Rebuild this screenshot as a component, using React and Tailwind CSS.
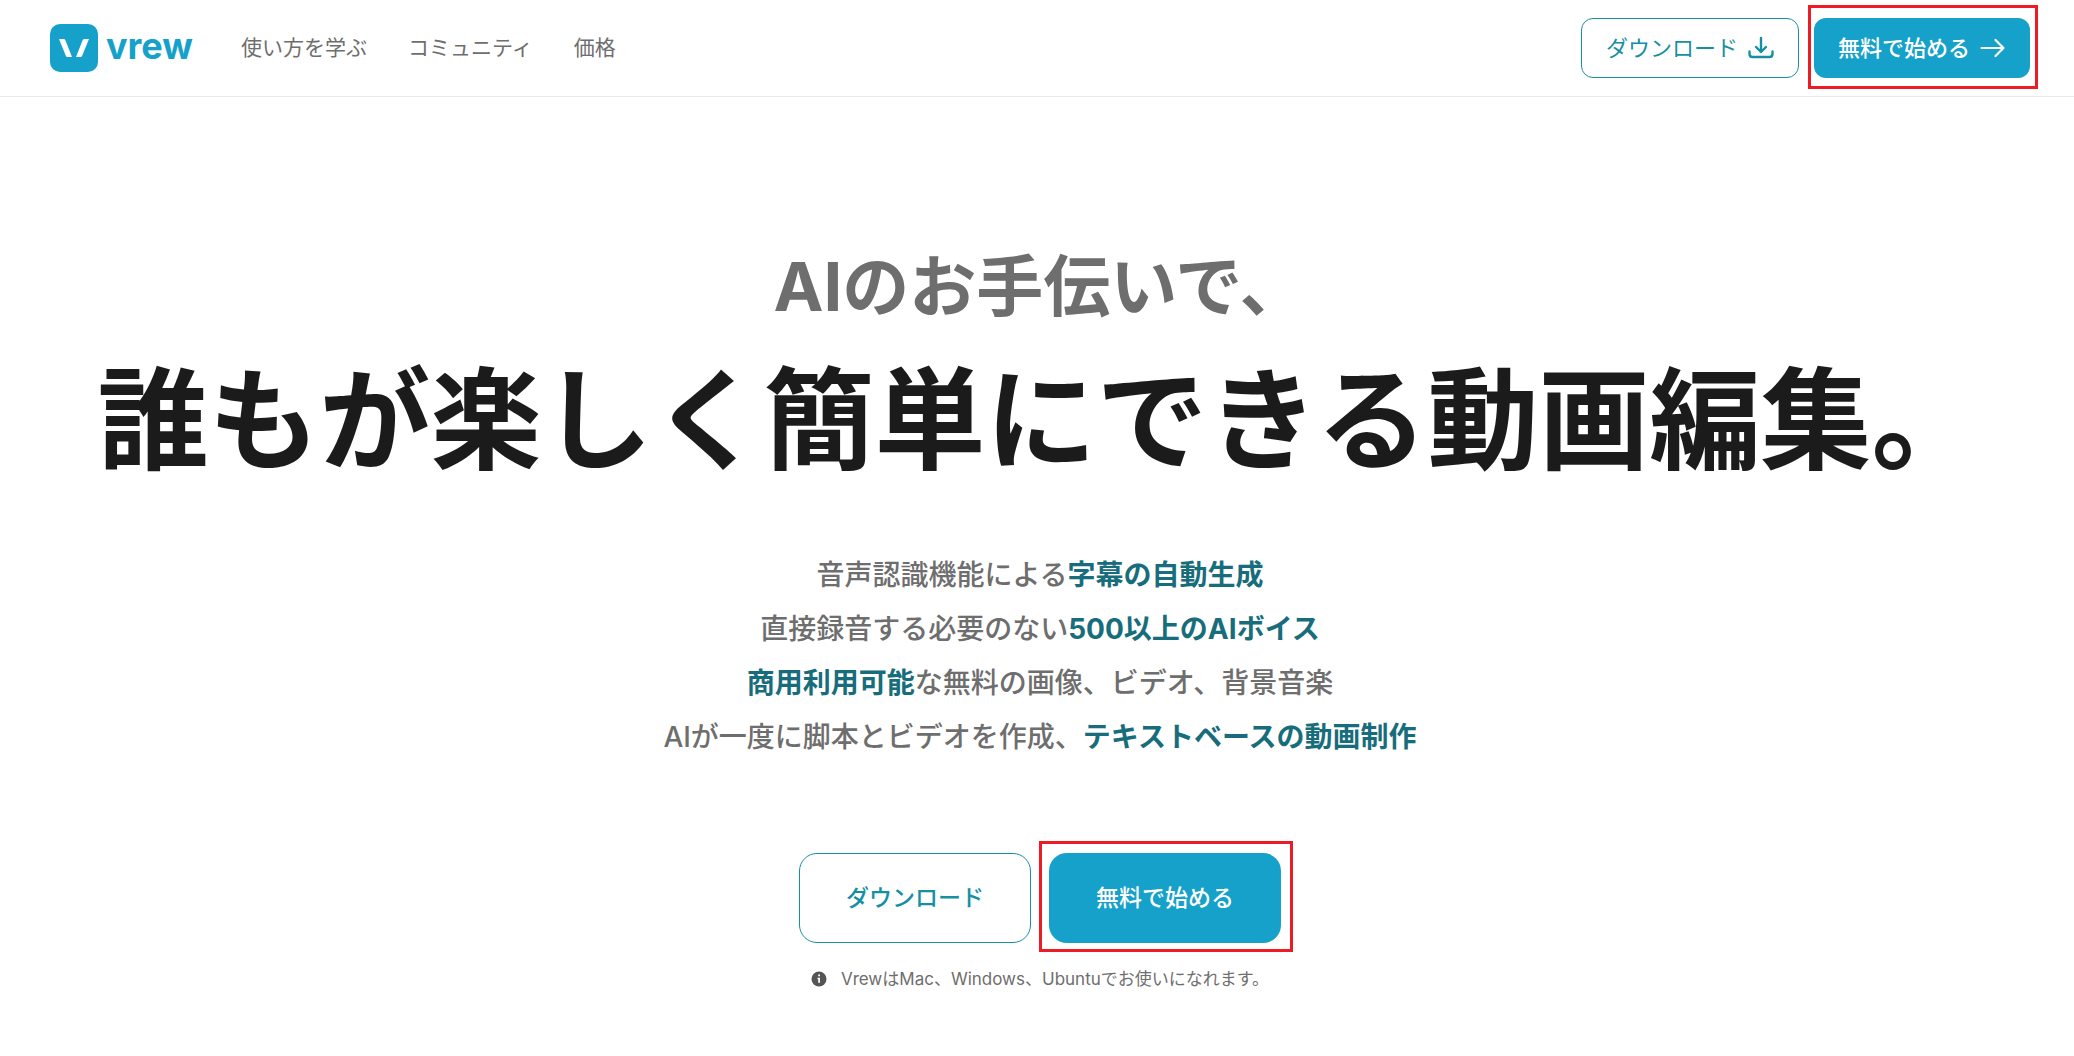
const NAV_LINKS = ['使い方を学ぶ', 'コミュニティ', '価格'];

function Logo() {
  return (
    <a href="#" aria-label="vrew" className="flex items-center gap-2">
      <svg viewBox="0 0 48 48" className="size-12" aria-hidden="true">
        <rect width="48" height="48" rx="10" fill="#15a1c9" />
        <path d="M9 15h4.500q1.400 0 2 1.400L22 33h-4.500q-1.200 0-1.700-1.200z" fill="#fff" />
        <path d="M39 15h-4.500q-1.400 0-2 1.400L26 33h4.500q1.200 0 1.700-1.200z" fill="#fff" />
      </svg>
      <span className="pb-1 text-4xl font-bold text-[#15a1c9]">vrew</span>
    </a>
  );
}

function DownloadIcon() {
  return (
    <svg viewBox="0 0 26 24" className="h-6 w-[26px]" fill="none" stroke="currentColor" strokeWidth="2.4" strokeLinecap="round" strokeLinejoin="round" aria-hidden="true">
      <path d="M13 2v13.500M8 11l5 5 5-5M1.500 15.500v2.500q0 3 3 3h17q3 0 3-3v-2.500" />
    </svg>
  );
}

function ArrowIcon() {
  return (
    <svg viewBox="0 0 26 24" className="h-6 w-[26px]" fill="none" stroke="currentColor" strokeWidth="2.200" strokeLinecap="round" strokeLinejoin="round" aria-hidden="true">
      <path d="M1.500 12h22M15.500 4l8 8-8 8" />
    </svg>
  );
}

function Header() {
  return (
    <header className="flex h-[97px] items-center justify-between border-b border-[#e8e8e8] pr-11 pl-[50px]">
      <div className="flex items-center gap-12">
        <Logo />
        <nav className="flex gap-[41px] text-[21px] text-[#6e6e6e]">
          {NAV_LINKS.map((label) => (
            <a key={label} href="#" className="hover:underline">{label}</a>
          ))}
        </nav>
      </div>

      <div className="flex gap-[15px] text-[22px]">
        <button type="button" className="flex h-15 items-center gap-2.5 rounded-xl border border-[#168fa3] px-6 text-[#168fa3]">
          ダウンロード
          <DownloadIcon />
        </button>
        <div className="relative">
          <button type="button" className="flex h-15 items-center gap-2.5 rounded-xl bg-[#15a1c9] px-6 font-medium text-white">
            無料で始める
            <ArrowIcon />
          </button>
          <span className="pointer-events-none absolute -top-[13px] -right-2 -bottom-[11px] -left-1.5 border-3 border-[#ed1c24]" />
        </div>
      </div>
    </header>
  );
}

function Strong({ children }) {
  return <strong className="font-bold text-[#176d7c]">{children}</strong>;
}

export default function App() {
  return (
    <div className="min-h-screen bg-white font-[Inter,'Noto_Sans_CJK_JP',sans-serif]" lang="ja">
      <Header />

      <main className="flex flex-col items-center pt-[141px] pl-1.5 text-center">
        <h1 className="font-bold text-[#1b1b1b]">
          <span className="block text-[67px] leading-[98px] text-[#6e6e6e]">AIのお手伝いで、</span>
          <span className="block text-[111px] leading-[170px]">誰もが楽しく簡単にできる動画編集。</span>
        </h1>

        <div className="mt-[42px] text-[28px] leading-[54px] font-medium text-[#6e6e6e]">
          <p>音声認識機能による<Strong>字幕の自動生成</Strong></p>
          <p>直接録音する必要のない<Strong>500以上のAIボイス</Strong></p>
          <p><Strong>商用利用可能</Strong>な無料の画像、ビデオ、背景音楽</p>
          <p>AIが一度に脚本とビデオを作成、<Strong>テキストベースの動画制作</Strong></p>
        </div>

        <div className="mt-[89px] flex gap-[18px] text-[23px]">
          <button type="button" className="h-[90px] rounded-[18px] border border-[#168fa3] px-[46px] font-medium text-[#168fa3]">
            ダウンロード
          </button>
          <div className="relative">
            <button type="button" className="h-[90px] rounded-[18px] bg-[#15a1c9] px-[47px] font-medium text-white">
              無料で始める
            </button>
            <span className="pointer-events-none absolute -top-3 -right-3 -bottom-[9px] -left-2.5 border-3 border-[#ed1c24]" />
          </div>
        </div>

        <p className="mt-6 flex items-center gap-3.5 text-[17px] leading-6 text-[#6e6e6e]">
          <svg viewBox="0 0 16 16" className="size-4" aria-hidden="true">
            <circle cx="8" cy="8" r="7.500" fill="#555" />
            <path d="M7.200 3.500h1.800v1.800H7.200zM6.500 6.800H9v5H7.200V8.200h-.7z" fill="#fff" />
          </svg>
          VrewはMac、Windows、Ubuntuでお使いになれます。
        </p>
      </main>
    </div>
  );
}
